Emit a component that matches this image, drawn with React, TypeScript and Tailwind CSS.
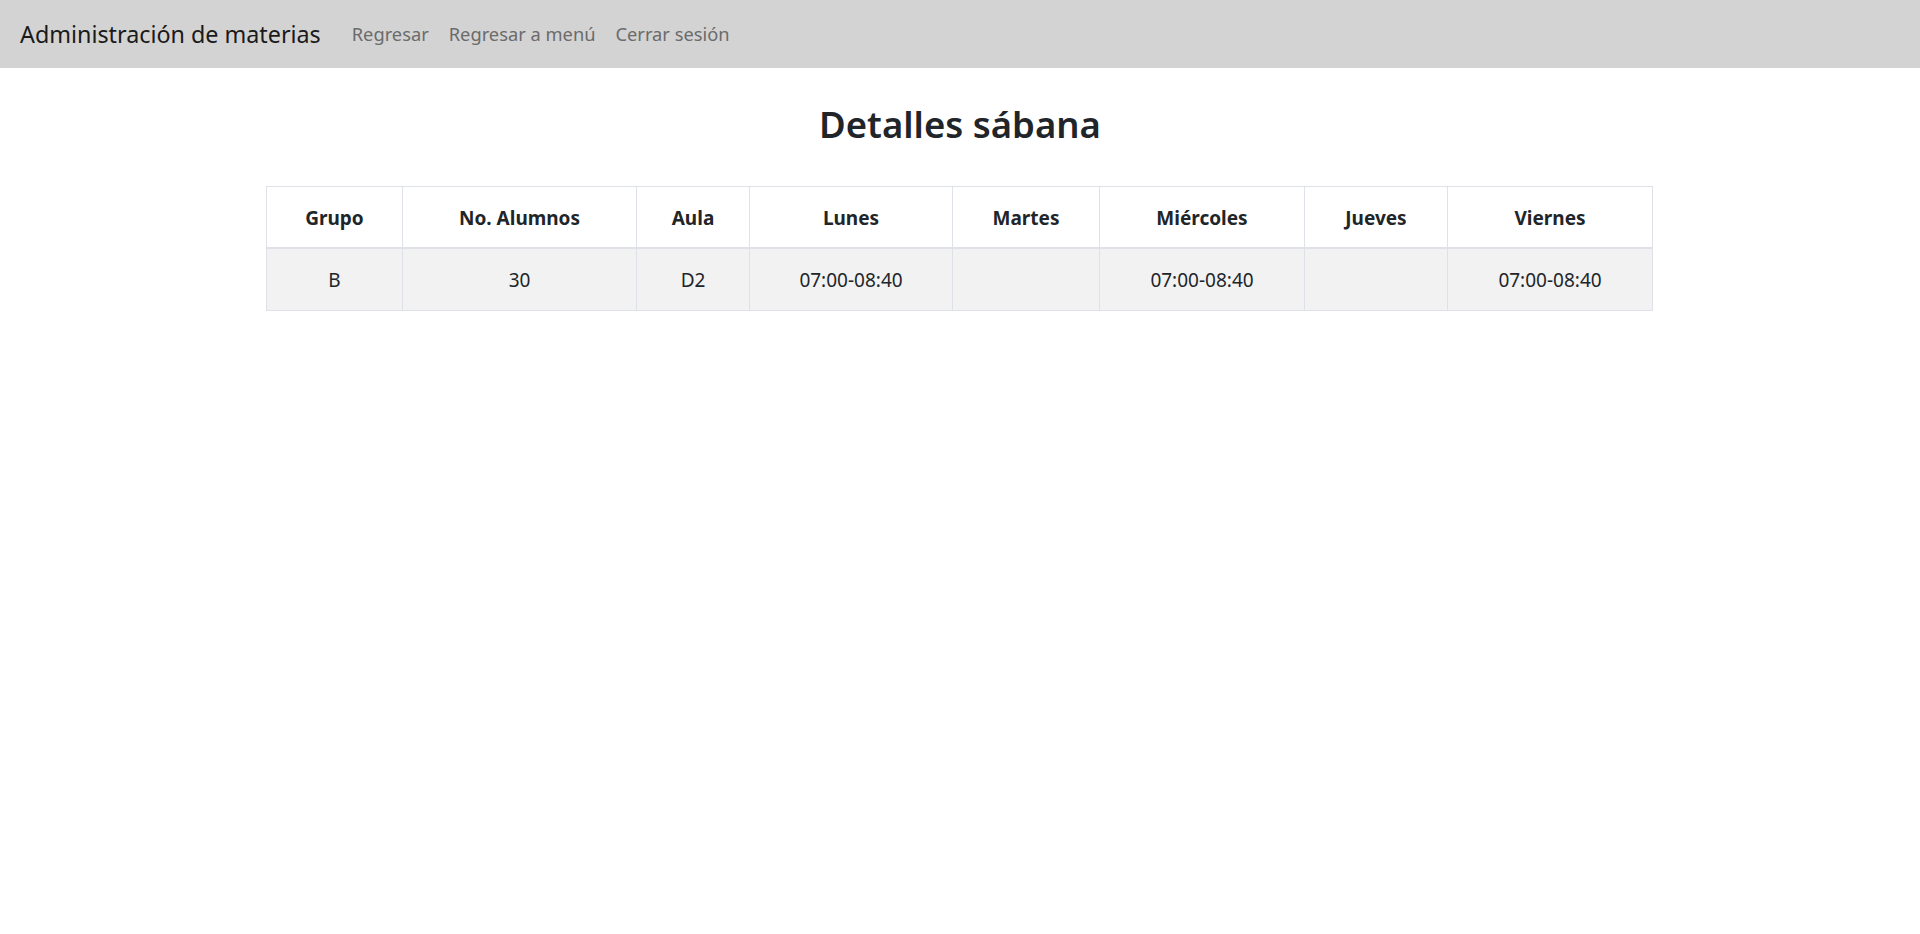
import React from "react";

const cols = [
  { h: "Grupo", v: "B", w: 136 },
  { h: "No. Alumnos", v: "30", w: 234 },
  { h: "Aula", v: "D2", w: 113 },
  { h: "Lunes", v: "07:00-08:40", w: 203 },
  { h: "Martes", v: "", w: 147 },
  { h: "Miércoles", v: "07:00-08:40", w: 205 },
  { h: "Jueves", v: "", w: 143 },
  { h: "Viernes", v: "07:00-08:40", w: 205 },
];

export default function App() {
  return (
    <div className="min-h-[934px] bg-white text-[#212529]" style={{ fontFamily: '"Noto Sans", "Open Sans", sans-serif' }}>
      <nav className="flex h-[68px] items-center bg-[#d3d3d3] px-[20px]">
        <span className="text-[23.3px] text-[#1a1a1a] mr-[31px]">Administración de materias</span>
        <div className="flex items-center gap-[20px] text-[18.3px] text-[#6b6b6b]">
          <span>Regresar</span>
          <span>Regresar a menú</span>
          <span>Cerrar sesión</span>
        </div>
      </nav>
      <h1 className="mt-[32px] text-center text-[36.5px] font-semibold leading-[48px] text-[#212529]">Detalles sábana</h1>
      <div className="mt-[38px] flex justify-center">
        <table className="table-fixed border-collapse w-[1386px] ml-[-1px]">
          <colgroup>
            {cols.map((c) => (
              <col key={c.h} style={{ width: c.w }} />
            ))}
          </colgroup>
          <thead>
            <tr className="h-[61px]">
              {cols.map((c) => (
                <th key={c.h} className="border border-[#dee2e6] border-b-2 pt-[3px] text-center align-middle text-[19px] font-bold text-[#212529]">
                  {c.h}
                </th>
              ))}
            </tr>
          </thead>
          <tbody>
            <tr className="h-[63px] bg-[#f2f2f2]">
              {cols.map((c) => (
                <td key={c.h} className="border border-[#dee2e6] pt-[2px] text-center align-middle text-[19px] text-[#212529]">
                  {c.v}
                </td>
              ))}
            </tr>
          </tbody>
        </table>
      </div>
    </div>
  );
}
